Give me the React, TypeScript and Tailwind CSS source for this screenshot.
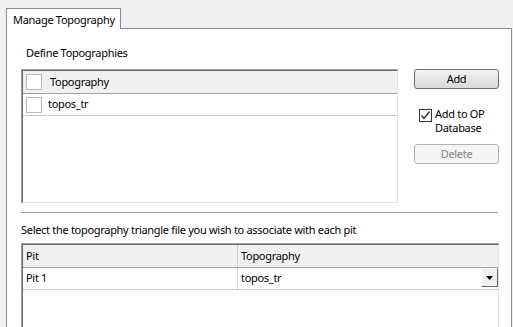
import React from "react";

function Box({ checked = false }: { checked?: boolean }) {
  return (
    <div className="w-[13px] h-[13px] border border-[#333333] bg-white flex items-center justify-center">
      {checked && (
        <svg width="11" height="11" viewBox="0 0 11 11">
          <path d="M1.5 5.5 L4 8.5 L9.5 1.5" fill="none" stroke="#222" strokeWidth="1.3" />
        </svg>
      )}
    </div>
  );
}

function ListCheck() {
  return <div className="w-[16px] h-[16px] border border-[#b8b8b8] bg-white shrink-0" />;
}

export default function App() {
  return (
    <div
      className="w-[513px] h-[327px] bg-[#f0f0f0] overflow-hidden text-[11px] tracking-[-0.3px] text-black whitespace-nowrap"
      style={{ fontFamily: "'Noto Sans', sans-serif" }}
    >
      <div className="pt-[8px] pl-[6px]">
        <div className="relative z-10 w-[115px] h-[21px] border border-b-0 border-[#898c95] bg-white -mb-px flex items-center pl-[6px] pt-[1px] leading-none">
          Manage Topography
        </div>
        <div className="w-[506px] h-[320px] border border-[#898c95] bg-white">
          <div className="pl-[14px] pt-[16px] flex flex-col">
            <div className="pl-[5px] leading-[15px]">Define Topographies</div>
            <div className="flex mt-[9px]">
              <div className="w-[377px] h-[134px] border-t border-l border-[#a0a0a0] border-r-white border-b-white">
                <div className="h-full border-t border-l border-[#696969] border-r border-b border-r-[#e3e3e3] border-b-[#e3e3e3]">
                  <div className="h-[23px] bg-[#f0f0f0] border-b border-[#a0a0a0] flex items-center pl-[3px]">
                    <ListCheck />
                    <span className="ml-[8px]">Topography</span>
                  </div>
                  <div className="h-[22px] border-b border-[#c8c8c8] flex items-center pl-[3px]">
                    <ListCheck />
                    <span className="ml-[6px]">topos_tr</span>
                  </div>
                </div>
              </div>
              <div className="ml-[16px] w-[85px] flex flex-col">
                <div className="h-[20px] rounded-[3px] border border-[#707070] bg-gradient-to-b from-[#f2f2f2] to-[#d9d9d9] flex items-center justify-center">
                  Add
                </div>
                <div className="flex mt-[18px] ml-[5px]">
                  <div className="mt-[2px]">
                    <Box checked />
                  </div>
                  <div className="ml-[3px] leading-[14px] text-left">
                    <div>Add to OP</div>
                    <div>Database</div>
                  </div>
                </div>
                <div className="h-[20px] mt-[9px] rounded-[3px] border border-[#adb2b5] bg-[#f4f4f4] text-[#838383] flex items-center justify-center">
                  Delete
                </div>
              </div>
            </div>
            <div className="w-[477px] h-px bg-[#a0a0a0] mt-[9px]" />
            <div className="mt-[9px] leading-[15px]">
              Select the topography triangle file you wish to associate with each pit
            </div>
            <div className="w-[478px] h-[100px] mt-[6px] border-t border-l border-[#a0a0a0] border-r-white border-b-white">
              <div className="h-full border-t border-l border-[#696969] border-r border-b border-r-[#e3e3e3] border-b-[#e3e3e3]">
                <div className="h-[23px] bg-[#f0f0f0] border-b border-[#a0a0a0] flex">
                  <div className="w-[215px] border-r border-[#d0d0d0] flex items-center pl-[3px]">Pit</div>
                  <div className="flex-1 flex items-center pl-[3px]">Topography</div>
                </div>
                <div className="h-[22px] border-b border-[#c8c8c8] flex">
                  <div className="w-[215px] border-r border-[#d0d0d0] flex items-center pl-[3px]">Pit 1</div>
                  <div className="flex-1 flex items-center pl-[3px] relative">
                    topos_tr
                    <div className="absolute right-[0px] top-0 w-[17px] h-[19px] bg-[#f0f0f0] border border-t-white border-l-white border-r-[#696969] border-b-[#696969] flex items-center justify-center">
                      <svg width="7" height="4" viewBox="0 0 7 4">
                        <path d="M0 0 H7 L3.5 4 Z" fill="#000" />
                      </svg>
                    </div>
                  </div>
                </div>
              </div>
            </div>
          </div>
        </div>
      </div>
    </div>
  );
}
